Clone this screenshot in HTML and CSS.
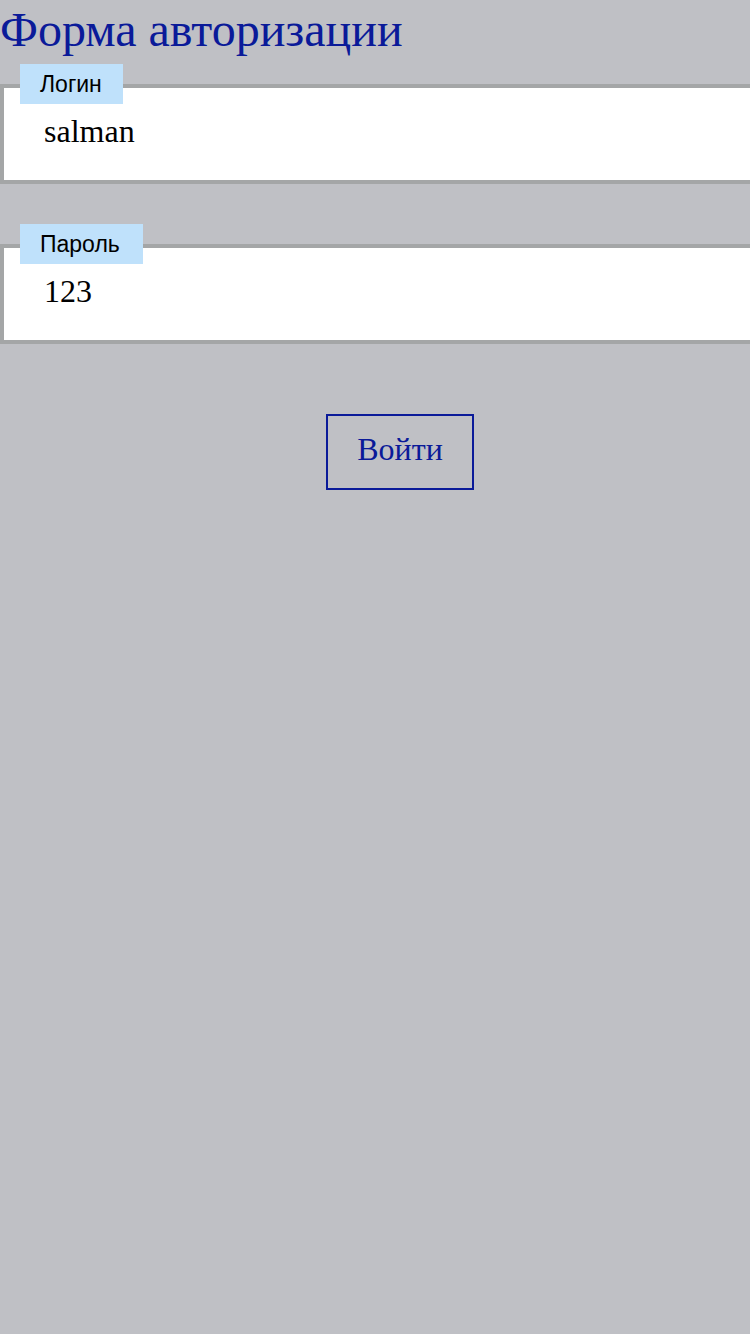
FILE: index.html
```html
<!DOCTYPE html>
<html lang="ru">
<head>
<meta charset="utf-8">
<title>Форма авторизации</title>
<link rel="stylesheet" href="styles.css">
</head>
<body>
<div class="page">
  <h1 class="title">Форма авторизации</h1>
  <form class="form">
    <div class="field">
      <span class="label">Логин</span>
      <div class="box">salman</div>
    </div>
    <div class="field">
      <span class="label label-wide">Пароль</span>
      <div class="box">123</div>
    </div>
    <div class="actions">
      <button type="button" class="btn">Войти</button>
    </div>
  </form>
</div>
</body>
</html>
```
FILE: styles.css
```css
html, body {
  margin: 0;
  padding: 0;
  background: #bfc0c5;
  overflow: hidden;
  height: 100%;
}
.page {
  width: 800px;
  font-family: "Liberation Serif", serif;
}
.title {
  margin: 0;
  padding-top: 2px;
  font-size: 48px;
  font-weight: normal;
  line-height: 55px;
  color: #0a1a99;
  height: 62px;
}
.form {
  display: flex;
  flex-direction: column;
}
.field {
  display: flex;
  flex-direction: column;
  align-items: flex-start;
  margin-bottom: 40px;
}
.label {
  position: relative;
  z-index: 1;
  margin-left: 20px;
  height: 40px;
  padding: 0 21px 0 20px;
  background: #bfe1fb;
  font-family: "Liberation Sans", Arial, sans-serif;
  font-size: 23px;
  line-height: 40px;
  color: #000;
}
.label-wide {
  padding-right: 23px;
}
.box {
  box-sizing: border-box;
  width: 800px;
  height: 100px;
  margin-top: -20px;
  border: 4px solid #a4a6a7;
  background: #fff;
  padding: 0 40px 6px;
  display: flex;
  align-items: center;
  font-size: 32px;
  color: #000;
}
.actions {
  display: flex;
  justify-content: center;
  padding-top: 30px;
}
.btn {
  box-sizing: border-box;
  width: 148px;
  height: 76px;
  border: 2px solid #0a1a99;
  background: transparent;
  font-family: "Liberation Serif", serif;
  font-size: 32px;
  color: #0a1a99;
  padding: 0 0 6px;
}
```
